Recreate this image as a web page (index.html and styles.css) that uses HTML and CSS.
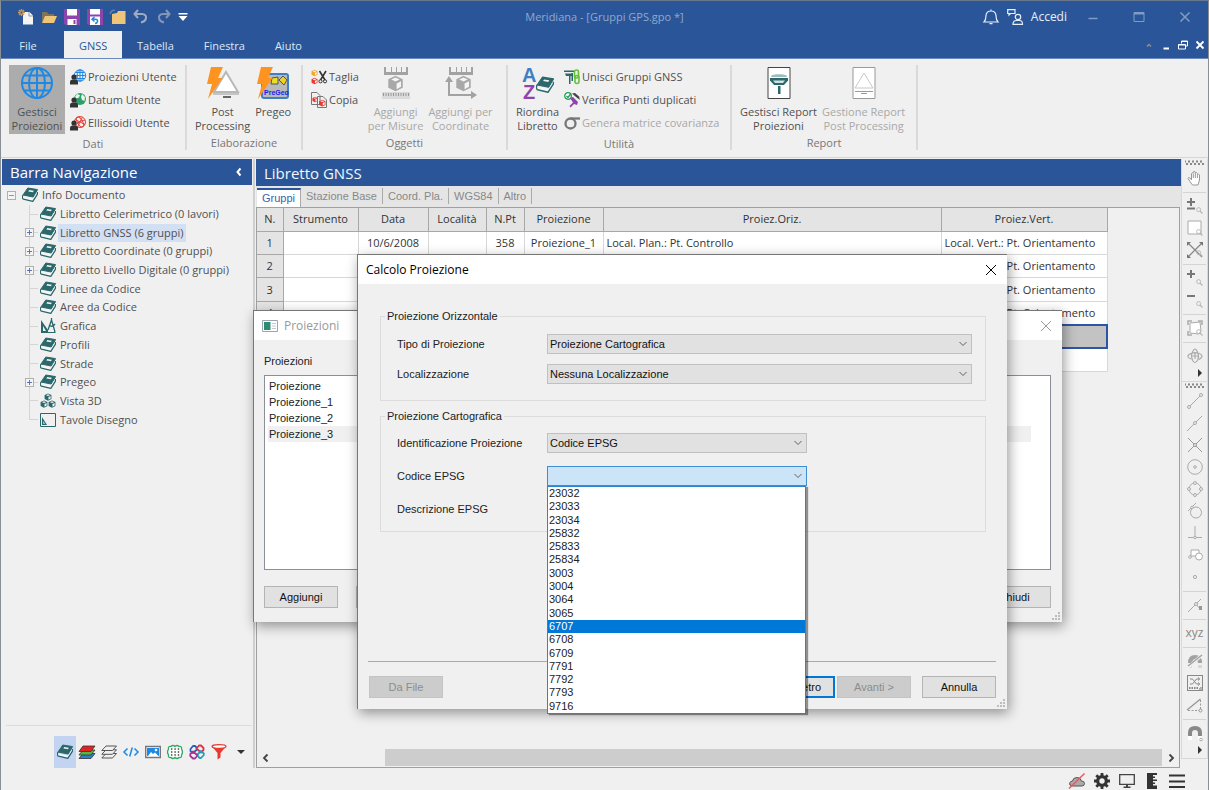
FILE: index.html
```html
<!DOCTYPE html>
<html lang="it">
<head>
<meta charset="utf-8">
<title>Meridiana - [Gruppi GPS.gpo *]</title>
<link rel="stylesheet" href="styles.css">
</head>
<body>
<svg class="defs" aria-hidden="true">
  <symbol id="book" viewBox="0 0 16 16">
    <path d="M5.800 1 15.600 2.600 11.200 10 1 8Z" fill="#2a686c" stroke="#2a686c" stroke-linejoin="round"/>
    <path d="M7.200 3 11.800 3.800 11 5.300 6.300 4.500Z" fill="#f0f0f0"/>
    <path d="M1.300 9.500 11.100 11.600 15.400 4.800 15.200 7.300 10.900 13.600 1.500 11.600Z" fill="#f6f6f6"/>
    <path d="M1 8C0 9.500.2 11.600 1.400 12.200L10.800 14.400 15.500 7V5" fill="none" stroke="#2a686c" stroke-width="1.300" stroke-linejoin="round"/>
  </symbol>
  <symbol id="globe" viewBox="0 0 32 32">
    <g fill="none" stroke="currentColor" stroke-width="2"><circle cx="16" cy="16" r="15"/><ellipse cx="16" cy="16" rx="8" ry="15"/><path d="M16 1V31M1 16H31M3.5 8.5H28.5M3.5 23.5H28.5"/></g>
  </symbol>
  <symbol id="user" viewBox="0 0 16 16">
    <circle cx="4" cy="8" r="2.600" fill="#333"/><path d="M0 15.500V12.600C0 11 1.500 10.400 4 10.400S8 11 8 12.600V15.500Z" fill="#333"/>
  </symbol>
  <symbol id="bolt" viewBox="0 0 16 32"><path d="M4 0H16L11 11H15.500L1 32 5 17H0Z" fill="#ff9320"/></symbol>
  <symbol id="cube" viewBox="0 0 16 16">
    <path d="M8 .8 14.800 4V12L8 15.400 1.200 12V4Z" fill="currentColor"/><path d="M4 4.300 8 2.400 12 4.300 8 6.100ZM9 8 13.200 5.800V11L9 13.300Z" fill="#f4f4f4"/>
  </symbol>
  <symbol id="ruler-top" viewBox="0 0 24 8"><path d="M0 0H24V8H0Z" fill="#a2a2a2"/><path d="M2 0H7V5H2ZM8 0H12V5H8ZM13 0H17V5H13ZM18 0H22V5H18Z" fill="#f0f0f0"/></symbol>
  <symbol id="lens" viewBox="0 0 8 8"><circle cx="3" cy="3" r="2.300" fill="none" stroke="#b4b4b4"/><path d="M4.600 4.600 7.400 7.400" stroke="#b4b4b4" stroke-width="1.300"/></symbol>
  <symbol id="chev" viewBox="0 0 10 6"><path d="M1.500 1 5 4.500 8.500 1" fill="none" stroke="#606060"/></symbol>
  <symbol id="antenna" viewBox="0 0 18 24"><g fill="#2a686c"><path d="M1 5C2 2.500 16 2.500 17 5L16.500 6H1.500Z" opacity=".45"/><path d="M0 7H18V9.500L14 14H4L0 9.500Z"/><path d="M8 15H10.500V23H8Z"/></g><path d="M3 9.500H15L13 12H5Z" fill="#cfe0e0"/></symbol>
  <symbol id="close" viewBox="0 0 12 12"><path d="M1 1 11 11M11 1 1 11" fill="none" stroke="currentColor"/></symbol>
  <symbol id="size-grip" viewBox="0 0 8 8"><path d="M6 0H8V2H6ZM3 3H5V5H3ZM6 3H8V5H6ZM0 6H2V8H0ZM3 6H5V8H3ZM6 6H8V8H6Z" fill="#bdbdbd"/></symbol>
</svg>

<div class="app">
  <header class="titlebar">
    <div class="quick">
      <button aria-label="Nuovo"><svg viewBox="0 0 16 16"><path d="M5 3H11.500L15 6.500V15.500H5Z" fill="#f4f4f4"/><path d="M11 3V7H15" fill="none" stroke="#999"/><path d="M3.500 0V7M0 3.500H7M1 1 6 6M6 1 1 6" stroke="#d49a4a" stroke-width="1.300"/><circle cx="3.500" cy="3.500" r="1" fill="#2a5699"/></svg></button>
      <button aria-label="Apri"><svg viewBox="0 0 16 16"><path d="M1 13V3H6L7.500 5H13V8" fill="#7f7358"/><path d="M1 14 4 7H16L13 14Z" fill="#efc57a"/></svg></button>
      <button aria-label="Salva"><svg viewBox="0 0 16 16"><path d="M0 0H16V16H1.500L0 14.500Z" fill="#8e44ad"/><path d="M3 0H13V6.500H3ZM3.500 10H12.500V16H3.500Z" fill="#fff"/><path d="M9.500 11H11.500V15H9.500Z" fill="#8e44ad"/></svg></button>
      <button aria-label="Salva e ripristina"><svg viewBox="0 0 16 16"><path d="M0 0H16V16H1.500L0 14.500Z" fill="#8e44ad"/><path d="M3 0H13V5.500H3ZM3 7.500H13V16H3Z" fill="#fff"/><path d="M7.500 8 5 10.300 7.500 12.500M5.500 10.300H8.500Q11 10.500 10.500 12.500T8 14.500" fill="none" stroke="#1e88e5" stroke-width="1.500"/></svg></button>
      <button aria-label="Cartella"><svg viewBox="0 0 16 16"><path d="M2 5 7 4 8 2H15.500V15H2Z" fill="#efc57a"/><path d="M0 5C1 2 3 1 5 1.500" fill="none" stroke="#5f7fa8" stroke-width="1.500"/></svg></button>
      <button aria-label="Annulla"><svg viewBox="0 0 16 16"><path d="M5 1 1.500 5 5 9M2 5H9Q13.500 5.500 13 9T8 13.500" fill="none" stroke="#9eabc0" stroke-width="2"/></svg></button>
      <button aria-label="Ripeti"><svg viewBox="0 0 16 16"><path d="M10 1 13.500 5 10 9M13 5H7Q2.500 5.500 3 9T8 13.500" fill="none" stroke="#8496b4" stroke-width="2"/></svg></button>
      <button class="narrow" aria-label="Personalizza"><svg viewBox="0 0 16 16"><path d="M3.500 4H12.500V5.500H3.500ZM3.500 7H12.500L8 12Z" fill="#fff"/></svg></button>
    </div>
    <h1>Meridiana - [Gruppi GPS.gpo *]</h1>
    <div class="account">
      <button aria-label="Notifiche"><svg viewBox="0 0 16 16" fill="none" stroke="#e8eef8" stroke-width="1.200"><path d="M1 13C3 11 3 9.500 3 6.500Q3.500 2 8 2T13 6.500C13 9.500 13 11 15 13ZM8 .5V2M6.500 14.700H9.500"/></svg></button>
      <button class="login"><svg viewBox="0 0 16 16" fill="none" stroke="#e8eef8" stroke-width="1.200"><path d="M.7.700H8V4.500H3.500L2 6V4.500H.7Z"/><circle cx="11" cy="8" r="2.700"/><path d="M6 15.300Q6 11.500 9.500 11.500H12.500Q15.500 11.500 15.500 15.300Z"/></svg>Accedi</button>
      <div class="wincontrols">
        <button aria-label="Riduci"><svg viewBox="0 0 12 12"><path d="M1.500 7.500H10.500" stroke="#7f9bc6" stroke-width="1.500"/></svg></button>
        <button aria-label="Ingrandisci"><svg viewBox="0 0 12 12"><path d="M1 1.500H11V10.500H1Z" fill="none" stroke="#7f9bc6"/><path d="M1 1H11V3.500H1Z" fill="#7f9bc6"/></svg></button>
        <button aria-label="Chiudi"><svg viewBox="0 0 12 12"><path d="M1.500 1.500 10.500 10.500M10.500 1.500 1.500 10.500" stroke="#7f9bc6" stroke-width="1.500"/></svg></button>
      </div>
    </div>
  </header>

  <nav class="menubar">
    <div class="menus">
      <button class="file">File</button>
      <button class="active">GNSS</button>
      <button>Tabella</button>
      <button>Finestra</button>
      <button>Aiuto</button>
    </div>
    <div class="mdi">
      <button aria-label="Comprimi"><svg viewBox="0 0 12 12"><path d="M4 7.500 6 5.500 8 7.500" fill="none" stroke="#8d8d8d" stroke-width="1.500"/></svg></button>
      <button aria-label="Riduci documento"><svg viewBox="0 0 12 12"><path d="M3.500 9.500H9" stroke="#fff" stroke-width="2"/></svg></button>
      <button aria-label="Ripristina documento"><svg viewBox="0 0 12 12" fill="none" stroke="#fff"><path d="M4.500 4.500V2H10.500V7H8.500M4.500 2.500H10.500M1.500 5.500H8.500V10H1.500ZM1.500 6H8.500"/></svg></button>
      <button aria-label="Chiudi documento"><svg viewBox="0 0 12 12"><path d="M2.500 2.500 9.500 9.500M9.500 2.500 2.500 9.500" stroke="#fff" stroke-width="1.800"/></svg></button>
    </div>
  </nav>

  <section class="ribbon">
    <div class="group dati">
      <div class="tools">
        <button class="big pressed"><svg class="blue" viewBox="0 0 32 32"><use href="#globe"/></svg>Gestisci<br>Proiezioni</button>
        <div class="stack">
          <button><svg viewBox="0 0 16 16"><g fill="none" stroke="#1e88e5"><circle cx="10" cy="6.500" r="5.700"/><ellipse cx="10" cy="6.500" rx="2.800" ry="5.700"/><path d="M10 1V12M4.500 6.500H15.500M5.500 3.500H14.500M5.500 9.500H14.500"/></g><use href="#user"/></svg>Proiezioni Utente</button>
          <button><svg viewBox="0 0 16 16"><circle cx="10" cy="7" r="6" fill="#2e9e6b"/><path d="M7 2 10 3 9 5.500 6.500 6.500 5 5ZM12 2 15 5 14.500 9 12 8 11 5Z" fill="#e8f4ee"/><use href="#user"/></svg>Datum Utente</button>
          <button><svg viewBox="0 0 16 16"><g fill="none" stroke="#e0443a"><circle cx="10" cy="7" r="5.500"/><ellipse cx="10" cy="7" rx="2.500" ry="5.500" transform="rotate(-30 10 7)"/><path d="M5 4.500 15 9.500M7.500 12 12.500 2M6 9.500Q10 5 15 5"/></g><use href="#user"/></svg>Ellissoidi Utente</button>
        </div>
      </div>
      <h2>Dati</h2>
    </div>
    <div class="group elaborazione">
      <div class="tools">
        <button class="big"><svg viewBox="0 0 32 32"><path d="M19 5 31 25H7Z" fill="#fff" stroke="#b8b8b8" stroke-width="2"/><path d="M6 26H32V28H6Z" fill="#c4c4c4"/><path d="M16 29H24V31H16Z" fill="#666"/><use href="#bolt" x="0" y="0" width="16" height="32"/></svg>Post<br>Processing</button>
        <button class="big"><svg viewBox="0 0 32 32"><rect x="5" y="7" width="26" height="24" rx="2" fill="#b9b9b9" stroke="#3f7fc4" stroke-width="2"/><path d="M15 11 21 10V17H14Z" fill="#e8e020" stroke="#555"/><path d="M22 13 26 9 30 13 27 18Z" fill="#f2d020" stroke="#555"/><use href="#bolt" x="0" y="0" width="16" height="32"/><text x="7" y="28" class="pregeo">PreGeo</text></svg>Pregeo</button>
      </div>
      <h2>Elaborazione</h2>
    </div>
    <div class="group oggetti">
      <div class="tools">
        <div class="stack">
          <button><svg viewBox="0 0 16 16"><use href="#cube" class="orange" width="7" height="8"/><use href="#cube" class="red" y="8" width="7" height="8"/><path d="M8.500 2 14 11M15 2 9.500 11" stroke="#333" stroke-width="1.600"/><circle cx="9.500" cy="12.300" r="1.600" fill="none" stroke="#333"/><circle cx="14" cy="12.300" r="1.600" fill="none" stroke="#333"/></svg>Taglia</button>
          <button><svg viewBox="0 0 16 16"><path d="M.5.500H6L9 3.500V12.500H.5ZM6.500 4.500H12L15.500 8V15.500H6.500Z" fill="#f0f0f0" stroke="#777"/><use href="#cube" class="red" x="1" y="4" width="6" height="7"/><use href="#cube" class="red" x="7.500" y="7" width="7.500" height="8"/></svg>Copia</button>
        </div>
        <button class="big" disabled><svg viewBox="0 0 32 32"><use href="#ruler-top" x="4" width="24" height="8"/><use href="#cube" x="7" y="8" width="17" height="17"/><path d="M2 25H30V32H2Z" fill="#dadada"/><path d="M3 27.500H29" stroke="#999" stroke-width="3" stroke-dasharray="1 1.500"/></svg>Aggiungi<br>per Misure</button>
        <button class="big" disabled><svg viewBox="0 0 32 32"><use href="#ruler-top" x="4" width="24" height="8"/><use href="#cube" x="10" y="8" width="17" height="17"/><path d="M4 12V28H28" fill="none" stroke="#a2a2a2" stroke-width="2"/><path d="M0 15 4 9 8 15ZM26 24 32 28 26 32Z" fill="#a2a2a2"/></svg>Aggiungi per<br>Coordinate</button>
      </div>
      <h2>Oggetti</h2>
    </div>
    <div class="group utilita">
      <div class="tools">
        <button class="big"><svg viewBox="0 0 32 32"><text x="0" y="15" class="az a">A</text><text x="1" y="32" class="az z">Z</text><use href="#book" x="14" y="9" width="18" height="18"/></svg>Riordina<br>Libretto</button>
        <div class="stack">
          <button><svg viewBox="0 0 16 16"><path d="M0 1.500H10V3H0ZM1 4.500H9L7.500 7H2ZM5 7H6.500V15H5ZM7.500 4H9V12H7.500Z" fill="#2a686c"/><rect x="10.500" y="1" width="4" height="8" rx="2" fill="none" stroke="#63c132" stroke-width="1.600"/><rect x="11" y="6.500" width="4" height="8" rx="2" fill="none" stroke="#63c132" stroke-width="1.600"/></svg>Unisci Gruppi GNSS</button>
          <button><svg viewBox="0 0 16 16"><circle cx="4" cy="4" r="3.300" fill="#fff" stroke="#1f9d57" stroke-width="1.300"/><path d="M2.500 4 4 5.500 7 1.500" fill="none" stroke="#1f9d57" stroke-width="1.300"/><path d="M8 1.500 11 1 15 4.500 16 8 12 5Z" fill="#444"/><path d="M6 6 9 5 14 10 13 13 10 12 6.500 15.500 5.500 14 9 10.500Z" fill="#8e44ad"/></svg>Verifica Punti duplicati</button>
          <button disabled><svg viewBox="0 0 16 16"><circle cx="6.500" cy="8.500" r="5" fill="none" stroke="#777" stroke-width="2.300"/><path d="M6.500 3.500H16" stroke="#777" stroke-width="2.300"/></svg>Genera matrice covarianza</button>
        </div>
      </div>
      <h2>Utilità</h2>
    </div>
    <div class="group report">
      <div class="tools">
        <button class="big"><svg viewBox="0 0 32 32"><path d="M5 .5H27V31.500H5Z" fill="#fff" stroke="#444"/><use href="#antenna" x="7" y="4" width="18" height="24"/></svg>Gestisci Report<br>Proiezioni</button>
        <button class="big" disabled><svg viewBox="0 0 32 32"><path d="M5 .5H27V31.500H5Z" fill="#fff" stroke="#999"/><path d="M16 6 25 21H7Z" fill="none" stroke="#c8c8c8"/><path d="M7 24.500H25M13 26.500H19" stroke="#999"/></svg>Gestione Report<br>Post Processing</button>
      </div>
      <h2>Report</h2>
    </div>
  </section>

  <div class="work">
    <aside class="nav">
      <div class="navhead"><h2>Barra Navigazione</h2><button aria-label="Comprimi barra"><svg viewBox="0 0 12 12"><path d="M7.500 2.500 4.500 6 7.500 9.500" fill="none" stroke="#fff" stroke-width="2"/></svg></button></div>
      <ul class="tree">
        <li class="root"><span class="branch"><button class="toggle minus" aria-label="Comprimi"></button></span><svg><use href="#book"/></svg><span class="label">Info Documento</span></li>
        <li><span class="branch"></span><svg><use href="#book"/></svg><span class="label">Libretto Celerimetrico (0 lavori)</span></li>
        <li><span class="branch"><button class="toggle" aria-label="Espandi"></button></span><svg><use href="#book"/></svg><span class="label selected">Libretto GNSS (6 gruppi)</span></li>
        <li><span class="branch"><button class="toggle" aria-label="Espandi"></button></span><svg><use href="#book"/></svg><span class="label">Libretto Coordinate (0 gruppi)</span></li>
        <li><span class="branch"><button class="toggle" aria-label="Espandi"></button></span><svg><use href="#book"/></svg><span class="label">Libretto Livello Digitale (0 gruppi)</span></li>
        <li><span class="branch"></span><svg><use href="#book"/></svg><span class="label">Linee da Codice</span></li>
        <li><span class="branch"></span><svg><use href="#book"/></svg><span class="label">Aree da Codice</span></li>
        <li><span class="branch"></span><svg viewBox="0 0 16 16"><path d="M1 2 8 12V15H1ZM3 8V13H6Z" fill="#2a686c" fill-rule="evenodd"/><path d="M8 12 11.500 2 15 14M9 7Q12 10 15 6M11.500 0V2" fill="none" stroke="#2a686c" stroke-width="1.300"/><path d="M8 14.500H15.500" stroke="#2a686c"/></svg><span class="label">Grafica</span></li>
        <li><span class="branch"></span><svg><use href="#book"/></svg><span class="label">Profili</span></li>
        <li><span class="branch"></span><svg><use href="#book"/></svg><span class="label">Strade</span></li>
        <li><span class="branch"><button class="toggle" aria-label="Espandi"></button></span><svg><use href="#book"/></svg><span class="label">Pregeo</span></li>
        <li><span class="branch"></span><svg class="teal" viewBox="0 0 16 16"><use href="#cube" x="4" y="0" width="8" height="8"/><use href="#cube" x="0" y="7" width="8" height="8"/><use href="#cube" x="8" y="7" width="8" height="8"/></svg><span class="label">Vista 3D</span></li>
        <li class="last"><span class="branch"></span><svg viewBox="0 0 16 16"><path d="M.5 1.500H15.500V14.500H.5Z" fill="none" stroke="#2a686c"/><path d="M2 5 7 13H2ZM3.300 9V11.700H5Z" fill="#2a686c" fill-rule="evenodd"/></svg><span class="label">Tavole Disegno</span></li>
      </ul>
      <div class="navfoot">
        <button class="on" aria-label="Libretti"><svg><use href="#book"/></svg></button>
        <button aria-label="Livelli colore"><svg viewBox="0 0 16 16" stroke="#333" stroke-width=".8"><path d="M4 9.500H16L12 14.500H0Z" fill="#2a7fd0"/><path d="M4 6H16L12 11H0Z" fill="#55b545"/><path d="M4 2H16L12 7.500H0Z" fill="#e02424"/></svg></button>
        <button aria-label="Livelli"><svg viewBox="0 0 16 16" fill="#f0f0f0" stroke="#555"><path d="M5 9.500H15.500L11.500 14H.8Z"/><path d="M5 5.800H15.500L11.500 10.300H.8Z"/><path d="M5 2H15.500L11.500 6.500H.8Z"/></svg></button>
        <button aria-label="Codice"><svg viewBox="0 0 16 16" fill="none" stroke="#1e88e5" stroke-width="1.500"><path d="M4.500 4.500 1 8 4.500 11.500M11.500 4.500 15 8 11.500 11.500M9.300 3.500 6.700 12.500"/></svg></button>
        <button aria-label="Immagini"><svg viewBox="0 0 16 16"><path d="M.7 2.500H15.300V13.500H.7Z" fill="#fff" stroke="#777" stroke-width="1.400"/><path d="M2 4H14V12H2Z" fill="#1e88e5"/><path d="M3 12 6 8 8 10 10 8.500 13.500 12Z" fill="#fff"/><circle cx="11" cy="6" r="1.300" fill="#fff"/></svg></button>
        <button aria-label="Nuvola di punti"><svg viewBox="0 0 16 16"><path d="M4 2.500Q6 .5 8 2.500Q10 .5 12 2.500Q15 2 14.500 5Q16.500 8 14.500 11Q15 14 12 13.500Q10 15.500 8 13.500Q6 15.500 4 13.500Q1 14 1.500 11Q-.5 8 1.500 5Q1 2 4 2.500Z" fill="#fff" stroke="#2eaa60" stroke-width="1.300"/><path d="M4 5H13M4 8H13M4 11H13" stroke="#444" stroke-width="1.400" stroke-dasharray="1.400 2"/></svg></button>
        <button aria-label="Blocchi"><svg viewBox="0 0 16 16" fill="none" stroke-width="1.800" stroke-linejoin="round"><path d="M8 4 6 2H4L1.500 5V7L4 9 8.500 5" stroke="#2464b4"/><path d="M7 5 10 1.500H12L14.500 4V6L12 8.500 8 5" stroke="#e0304c"/><path d="M9 12 10.500 14H12L14.800 11V9.500L12 7 8 11" stroke="#20a0b4"/><path d="M9 11 6 14.500H4L1.300 12V10L4 7.500 8 11" stroke="#a83298"/></svg></button>
        <button aria-label="Filtro"><svg viewBox="0 0 16 16"><path d="M1 2.500 6.500 9V15.500L9.500 13.500V9L15 2.500Z" fill="#e8392e"/><ellipse cx="8" cy="2.500" rx="7" ry="1.800" fill="#fff" stroke="#e8392e" stroke-width="1.200"/></svg></button>
        <button aria-label="Altro"><svg viewBox="0 0 16 16"><path d="M4 6H12L8 10Z" fill="#333"/></svg></button>
      </div>
    </aside>

    <main class="doc">
      <h2 class="dochead">Libretto GNSS</h2>
      <div class="tabs">
        <button class="active">Gruppi</button><button>Stazione Base</button><button>Coord. Pla.</button><button>WGS84</button><button>Altro</button>
      </div>
      <div class="pane">
        <div class="gridarea">
          <table>
            <colgroup><col class="c26"><col class="c75"><col class="c70"><col class="c58"><col class="c38"><col class="c79"><col class="c338"><col class="c166"></colgroup>
            <thead><tr><th>N.</th><th>Strumento</th><th>Data</th><th>Località</th><th>N.Pt</th><th>Proiezione</th><th>Proiez.Oriz.</th><th>Proiez.Vert.</th></tr></thead>
            <tbody>
              <tr><th>1</th><td></td><td class="center">10/6/2008</td><td></td><td class="center">358</td><td class="center">Proiezione_1</td><td>Local. Plan.: Pt. Controllo</td><td>Local. Vert.: Pt. Orientamento</td></tr>
              <tr><th>2</th><td></td><td></td><td></td><td></td><td></td><td></td><td>Local. Vert.: Pt. Orientamento</td></tr>
              <tr><th>3</th><td></td><td></td><td></td><td></td><td></td><td></td><td>Local. Vert.: Pt. Orientamento</td></tr>
              <tr><th>4</th><td></td><td></td><td></td><td></td><td></td><td></td><td>Local. Vert.: Pt. Orientamento</td></tr>
              <tr><th></th><td></td><td></td><td></td><td></td><td></td><td></td><td class="current"></td></tr>
              <tr><th></th><td></td><td></td><td></td><td></td><td></td><td></td><td></td></tr>
            </tbody>
          </table>
        </div>
        <div class="scroll">
          <button aria-label="Scorri a sinistra"><svg viewBox="0 0 12 12"><path d="M7.500 2.500 4 6 7.500 9.500" fill="none" stroke="#444" stroke-width="1.800"/></svg></button>
          <div class="track"><div class="thumb"></div></div>
          <button aria-label="Scorri a destra"><svg viewBox="0 0 12 12"><path d="M4.500 2.500 8 6 4.500 9.500" fill="none" stroke="#444" stroke-width="1.800"/></svg></button>
        </div>
      </div>
    </main>

    <div class="toolbar">
      <div class="bar">
        <div class="grip"></div>
        <button aria-label="Sposta"><svg viewBox="0 0 16 16"><path d="M4 13 1 8.500Q1 7 3 8L4.500 10V3.500Q5.200 2 6.200 3.500V2Q7 .5 8.200 2V3Q9.500 1.500 10.300 3.500V4.500Q12 3.500 12.500 5V10L11 15H5.500ZM6.300 4V8M8.300 3V8M10.400 5V8" fill="#fff" stroke="#999"/></svg></button>
        <hr>
        <button aria-label="Zoom dinamico"><svg viewBox="0 0 16 16"><path d="M4 0V8M0 4H8M0 10.500H8" stroke="#777" stroke-width="2"/><use href="#lens" x="9" y="9" width="7" height="7"/></svg></button>
        <button aria-label="Zoom finestra"><svg viewBox="0 0 16 16"><path d="M1 1H14V14H1Z" fill="#fff" stroke="#aaa"/><use href="#lens" x="9" y="9" width="7" height="7"/></svg></button>
        <button aria-label="Zoom estensione"><svg viewBox="0 0 16 16"><path d="M1 1 15 15M15 1 1 15" stroke="#888" stroke-width="1.300"/><path d="M0 0H4L0 4ZM16 0V4L12 0ZM0 16V12L4 16Z" fill="#777"/><use href="#lens" x="9" y="8" width="7" height="7"/></svg></button>
        <hr>
        <button aria-label="Zoom avanti"><svg viewBox="0 0 16 16"><path d="M4 0V8M0 4H8" stroke="#777" stroke-width="2"/><use href="#lens" x="9" y="9" width="7" height="7"/></svg></button>
        <button aria-label="Zoom indietro"><svg viewBox="0 0 16 16"><path d="M0 4H8" stroke="#777" stroke-width="2"/><use href="#lens" x="9" y="9" width="7" height="7"/></svg></button>
        <hr>
        <button aria-label="Zoom selezione"><svg viewBox="0 0 16 16"><path d="M3 3 13 2 14 11 12 14 3 13Z" fill="#fff" stroke="#aaa"/><path d="M1 5V1H5M11 1H15V5M1 11V15H5" fill="none" stroke="#aaa" stroke-width="1.500"/><use href="#lens" x="9" y="9" width="7" height="7"/></svg></button>
        <hr>
        <button aria-label="Orbita"><svg viewBox="0 0 16 16" fill="none" stroke="#aaa" stroke-width="1.200"><path d="M4 11Q-1 9 2 6.500Q6 4 11 5Q17 7 14 10L12 11.500M6 13Q3 8 6 3Q8-1 10 3Q13 9 10 13Q8 16 6 13M8 5V11M5 8H11"/></svg></button>
        <button class="more" aria-label="Altri strumenti"><svg viewBox="0 0 8 8"><path d="M2 0 6 4 2 8Z" fill="#333"/></svg></button>
      </div>
      <div class="bar">
        <div class="grip"></div>
        <button aria-label="Estremi"><svg viewBox="0 0 16 16" fill="#f0f0f0" stroke="#aaa"><path d="M2 14 14 2"/><circle cx="2" cy="14" r="1.500"/><circle cx="14" cy="2" r="1.500"/></svg></button>
        <button aria-label="Punto medio"><svg viewBox="0 0 16 16" fill="#f0f0f0" stroke="#aaa"><path d="M0 16 15 1"/><circle cx="8" cy="8" r="1.500"/></svg></button>
        <button aria-label="Intersezione"><svg viewBox="0 0 16 16" fill="#f0f0f0" stroke="#999"><path d="M1 1 15 15M15 1 1 15"/><circle cx="8" cy="8" r="1.500"/></svg></button>
        <button aria-label="Centro"><svg viewBox="0 0 16 16" fill="none" stroke="#aaa"><circle cx="8" cy="8" r="7.300"/><circle cx="8" cy="8" r="1.300"/></svg></button>
        <button aria-label="Quadrante"><svg viewBox="0 0 16 16" fill="#f0f0f0" stroke="#aaa"><circle cx="8" cy="8" r="6"/><circle cx="8" cy="2" r="1.500"/><circle cx="8" cy="14" r="1.500"/><circle cx="2" cy="8" r="1.500"/><circle cx="14" cy="8" r="1.500"/></svg></button>
        <button aria-label="Tangente"><svg viewBox="0 0 16 16" fill="none" stroke="#aaa"><circle cx="9" cy="9.500" r="5.500"/><path d="M1 8 9 0"/><circle cx="5" cy="4.500" r="1.300" fill="#f0f0f0"/></svg></button>
        <button aria-label="Perpendicolare"><svg viewBox="0 0 16 16" fill="#f0f0f0" stroke="#aaa"><path d="M8 1V13M1 12.500H15"/><circle cx="8" cy="12.500" r="1.300"/></svg></button>
        <button aria-label="Inserimento"><svg viewBox="0 0 16 16" fill="#fff" stroke="#aaa"><path d="M4 9V3H12V9Z"/><circle cx="12" cy="9.500" r="3.500"/><circle cx="3" cy="10" r="1.300"/></svg></button>
        <button aria-label="Nodo"><svg viewBox="0 0 16 16" fill="none" stroke="#aaa"><circle cx="8" cy="8" r="1.600"/></svg></button>
        <hr>
        <button aria-label="Vicino"><svg viewBox="0 0 16 16"><path d="M1 15 14 2M9 7 13 12" fill="none" stroke="#aaa"/><circle cx="9" cy="7" r="1.500" fill="#f0f0f0" stroke="#aaa"/><path d="M12 9H15V13H12Z" fill="#999"/></svg></button>
        <hr>
        <button class="xyz" aria-label="Coordinate xyz">xyz</button>
        <hr>
        <button aria-label="Disattiva snap"><svg viewBox="0 0 16 16"><path d="M1 10Q1 2 8 2T15 10H11Q10 6 8 6T5 10Z" fill="#a2a2a2"/><path d="M1 12H5V15H1ZM11 12H15V15H11Z" fill="#d8d8d8"/><path d="M0 15 15 2" stroke="#f0f0f0" stroke-width="3"/><path d="M1 13 15 2" stroke="#a2a2a2" stroke-width="1.500"/></svg></button>
        <button aria-label="Scambia"><svg viewBox="0 0 16 16" fill="none" stroke="#888"><rect x=".5" y=".5" width="15" height="15"/><path d="M3 4H5.500L9.500 9H12M3 9H5.500L9.500 4H12M11 2.500 12.800 4 11 5.500M11 7.500 12.800 9 11 10.500"/><path d="M2 13H12" stroke-width="2" stroke-dasharray="1.500 1"/><circle cx="14" cy="14" r="1.300" fill="#f0f0f0"/></svg></button>
        <button aria-label="Angolo"><svg viewBox="0 0 16 16" fill="none" stroke="#999"><path d="M0 13 13.500 2" stroke-width="1.400"/><path d="M13.500 3V12M1 13.500H12" stroke-dasharray="2 1.500"/><circle cx="13.500" cy="13.500" r="1.500"/></svg></button>
        <hr>
        <button aria-label="Snap"><svg viewBox="0 0 16 16"><path d="M3 11V8Q3 3 8 3T13 8V11" fill="none" stroke="#888" stroke-width="4"/><path d="M1 11H5V15H1ZM11 11H15V15H11Z" fill="#fff"/><circle cx="14" cy="14.500" r="1.300" fill="none" stroke="#aaa"/></svg></button>
        <button class="more" aria-label="Altri snap"><svg viewBox="0 0 8 8"><path d="M2 0 6 4 2 8Z" fill="#333"/></svg></button>
      </div>
    </div>
  </div>

  <footer class="status">
    <button aria-label="Cloud non connesso"><svg viewBox="0 0 16 16"><path d="M3 13Q0 12.500.7 10Q1.500 8 3.500 8Q4 4.500 8 4.500Q12 4.500 12.300 8Q15.500 8 15.500 10.500Q15.300 13 13 13Z" fill="#aaa" stroke="#555"/><path d="M0 15.500 15.500.5" stroke="#f0565a" stroke-width="1.500"/></svg></button>
    <button aria-label="Impostazioni"><svg viewBox="0 0 16 16"><circle cx="8" cy="8" r="4.200" fill="none" stroke="#333" stroke-width="3.500"/><path d="M8 0V16M0 8H16M2.300 2.300 13.700 13.700M13.700 2.300 2.300 13.700" stroke="#333" stroke-width="2.800"/><circle cx="8" cy="8" r="2.700" fill="#f0f0f0"/></svg></button>
    <button aria-label="Schermo"><svg viewBox="0 0 16 16"><path d="M.7 1.700H15.300V11.300H.7Z" fill="none" stroke="#444" stroke-width="1.300"/><path d="M7 11.500H9V13.500H11.500V15H4.500V13.500H7Z" fill="#444"/></svg></button>
    <button aria-label="Righello"><svg viewBox="0 0 16 16"><path d="M3 0H13V2H9V3.500H11V5H9V6.500H13V8H9V9.500H11V11H9V12.500H13V16H3Z" fill="#333"/></svg></button>
    <button aria-label="Menu"><svg viewBox="0 0 16 16"><path d="M0 2.500H16M0 8.500H16M0 14H16" stroke="#333" stroke-width="1.800"/></svg></button>
  </footer>

  <section class="window projections" role="dialog" aria-labelledby="w1">
    <header><svg class="winicon" viewBox="0 0 16 12"><path d="M.5.500H15.500V11.500H.5Z" fill="#fff" stroke="#9aa5b1"/><path d="M2 2H8.500V10H2Z" fill="#2f8a72"/><path d="M10 3.500H14M10 6H14M10 8.500H14" stroke="#c0c8d0"/></svg><h2 id="w1">Proiezioni</h2><button class="x" aria-label="Chiudi"><svg><use href="#close"/></svg></button></header>
    <div class="winbody">
      <h3 id="plist">Proiezioni</h3>
      <ul class="listbox" role="listbox" aria-labelledby="plist">
        <li role="option">Proiezione</li><li role="option">Proiezione_1</li><li role="option">Proiezione_2</li><li role="option" aria-selected="true" class="sel">Proiezione_3</li>
      </ul>
      <div class="buttons"><button class="btn">Aggiungi</button><button class="btn"></button><button class="btn end">Chiudi</button></div>
    </div>
    <svg class="sizegrip"><use href="#size-grip"/></svg>
  </section>

  <section class="window calc" role="dialog" aria-labelledby="w2">
    <header><h2 id="w2">Calcolo Proiezione</h2><button class="x" aria-label="Chiudi"><svg><use href="#close"/></svg></button></header>
    <form class="form">
      <fieldset class="horizontal">
        <legend>Proiezione Orizzontale</legend>
        <div class="field"><label for="tipo">Tipo di Proiezione</label><div class="pick"><select id="tipo"><option>Proiezione Cartografica</option></select><svg><use href="#chev"/></svg></div></div>
        <div class="field"><label for="loc">Localizzazione</label><div class="pick"><select id="loc"><option>Nessuna Localizzazione</option></select><svg><use href="#chev"/></svg></div></div>
      </fieldset>
      <fieldset class="carto">
        <legend>Proiezione Cartografica</legend>
        <div class="field"><label for="ident">Identificazione Proiezione</label><div class="pick short"><select id="ident"><option>Codice EPSG</option></select><svg><use href="#chev"/></svg></div></div>
        <div class="field"><label for="epsg">Codice EPSG</label><div class="pick short open"><select id="epsg"><option></option></select><svg><use href="#chev"/></svg>
          <ul class="droplist" role="listbox"><li>23032</li><li>23033</li><li>23034</li><li>25832</li><li>25833</li><li>25834</li><li>3003</li><li>3004</li><li>3064</li><li>3065</li><li class="hot">6707</li><li>6708</li><li>6709</li><li>7791</li><li>7792</li><li>7793</li><li>9716</li></ul></div></div>
        <div class="field"><span>Descrizione EPSG</span></div>
      </fieldset>
      <div class="actions">
        <button type="button" class="btn" disabled>Da File</button>
        <button type="button" class="btn default">&lt; Indietro</button>
        <button type="button" class="btn" disabled>Avanti &gt;</button>
        <button type="button" class="btn cancel">Annulla</button>
      </div>
    </form>
    <svg class="sizegrip"><use href="#size-grip"/></svg>
  </section>
</div>
</body>
</html>
```
FILE: styles.css
```css
* { box-sizing: border-box; margin: 0; padding: 0; }
:root {
  --blue: #2a5699;
  --ui: "Open Sans", "Noto Sans", sans-serif;
  --dlg: "Liberation Sans", Arial, sans-serif;
}
body { font: 11px/16px var(--ui); color: #505050; background: #f0f0f0; }
button { font: inherit; color: inherit; background: none; border: 0; }
svg { display: block; width: 16px; height: 16px; flex: none; overflow: visible; }
ul { list-style: none; }
h1, h2, h3 { font-weight: 400; font-size: inherit; }
.defs { position: absolute; width: 0; height: 0; }
.blue { color: #1e88e5; }
.orange { color: #f5a623; }
.red { color: #e8392e; }
.teal { color: #2a686c; }

.app { position: relative; display: flex; flex-direction: column; height: 100vh; border: 1px solid #8a8f96; border-top-color: #67788d; border-bottom: 0; overflow: hidden; }

.titlebar { display: grid; grid-template-columns: 1fr auto 1fr; align-items: center; height: 31px; background: var(--blue); }
.titlebar h1 { color: #8fa9d0; }
.quick { display: flex; gap: 7px; padding-left: 17px; }
.quick .narrow { margin-left: -4px; }
.account { display: flex; justify-content: flex-end; align-items: center; color: #e8eef8; font-size: 12px; }
.login { display: flex; align-items: center; gap: 8px; margin-left: 8px; }
.wincontrols { display: flex; gap: 34px; padding: 0 17px 0 20px; }
.wincontrols svg, .mdi svg { width: 12px; height: 12px; }

.menubar { display: flex; justify-content: space-between; align-items: flex-end; height: 27px; background: var(--blue); color: #dfe7f3; border-bottom: 1px solid #6a8abd; }
.menus { display: flex; height: 27px; }
.menus button { padding: 3px 15px 0; }
.menus .file { width: 54px; margin-right: 9px; }
.menus .active { width: 58px; background: #f0f0f0; color: var(--blue); }
.mdi { display: flex; gap: 5px; padding: 0 2px 7px 0; }

.ribbon { display: flex; height: 99px; padding: 6px 0 7px; border-bottom: 1px solid #d6d6d6; }
.group { display: flex; flex-direction: column; padding: 0 8px; border-right: 2px solid #dadada; }
.group h2 { text-align: center; line-height: 20px; color: #777; }
.tools { display: flex; gap: 5px; height: 70px; }
.big { display: flex; flex-direction: column; align-items: center; padding-top: 2px; line-height: 14px; white-space: nowrap; flex: none; }
.big svg { width: 32px; height: 32px; margin-bottom: 6px; }
.big.pressed { background: #acacac; width: 56px; }
.ribbon button:disabled { color: #a8a8a8; }
.stack { display: flex; flex-direction: column; }
.stack button { display: flex; align-items: center; gap: 2px; height: 23px; white-space: nowrap; }
.dati { width: 186px; }
.elaborazione { width: 116px; }
.oggetti { width: 205px; }
.oggetti .stack { margin-right: 4px; }
.utilita { width: 224px; }
.report { width: 186px; }
.pregeo { font: bold 7px var(--dlg); fill: #2020f0; }
.az { font: bold 20px var(--dlg); }
.a { fill: #3f7fc4; }
.z { fill: #8e44ad; }

.work { flex: 1; display: flex; min-height: 0; padding-top: 1px; }
.nav { display: flex; flex-direction: column; width: 251px; flex: none; padding-left: 1px; }
.navhead { display: flex; justify-content: space-between; align-items: center; height: 26px; padding: 0 7px 0 8px; background: var(--blue); color: #fff; }
.navhead h2, .dochead { font-size: 15px; line-height: 26px; }
.navhead svg { width: 12px; height: 12px; }
.tree { display: grid; grid-auto-rows: 1fr; height: 243px; margin-top: 1px; padding-left: 22px; }
.tree li { display: flex; align-items: center; }
.tree li.root { margin-left: -18px; }
.branch { display: flex; align-items: center; width: 16px; height: 100%; background: linear-gradient(#d4d4d4, #d4d4d4) 5px 0 / 1px 100% no-repeat, linear-gradient(#d4d4d4, #d4d4d4) 5px 50% / 9px 1px no-repeat; }
.root .branch { background: none; }
.last .branch { background-size: 1px 50%, 9px 1px; }
.toggle { width: 9px; height: 9px; margin-left: 1px; border: 1px solid #b0b0b0; background: linear-gradient(#5a78b4, #5a78b4) center / 5px 1px no-repeat, linear-gradient(#5a78b4, #5a78b4) center / 1px 5px no-repeat, #f4f4f4; }
.toggle.minus { background: linear-gradient(#7f97c4, #7f97c4) center / 5px 1px no-repeat, #f4f4f4; }
.label { margin-left: 2px; padding: 0 2px; line-height: 18px; white-space: nowrap; }
.selected { background: #d3dff3; }
.navfoot { display: flex; align-items: center; margin: auto 0 0 4px; padding: 10px 0 0 48px; border-top: 1px solid #dcdcdc; }
.navfoot button { display: grid; place-items: center; flex: none; width: 22px; height: 32px; }
.navfoot .on { background: #c3d4f2; }

.doc { flex: 1; display: flex; flex-direction: column; min-width: 0; border-left: 2px solid #d0d0d0; margin-left: 1px; padding-left: 1px; }
.dochead { height: 27px; line-height: 28px; padding-left: 8px; background: var(--blue); color: #f4f6fa; }
.tabs { display: flex; height: 21px; padding: 2px 0 0 1px; background: #e5e5e5; font: 11px/16px var(--dlg); color: #888; }
.tabs button { padding: 0 5px; height: 16px; border-right: 1px solid #aaa; }
.tabs .active { height: 19px; padding-bottom: 3px; border-top: 2px solid var(--blue); background: #fff; color: #3465b0; }
.pane { flex: 1; display: flex; flex-direction: column; min-height: 0; border: 1px solid #a0a0a0; margin-right: 1px; }
.gridarea { flex: 1; min-height: 0; overflow: hidden; }
table { border-collapse: collapse; table-layout: fixed; width: 850px; height: 164px; color: #333; background: #fff; }
tr { height: 23px; }
th { font-weight: 400; background: #e4e4e4; border: 1px solid #a8a8a8; border-width: 0 1px 1px 0; text-align: center; }
td { border: 1px solid #d8d8d8; border-width: 0 1px 1px 0; padding: 0 3px; white-space: nowrap; overflow: hidden; }
.center { text-align: center; }
td.current { background: #c3c3c3; border: 2px solid #2c56a4; }
.c26 { width: 26px; } .c75 { width: 75px; } .c70 { width: 70px; } .c58 { width: 58px; } .c38 { width: 38px; } .c79 { width: 79px; } .c338 { width: 338px; } .c166 { width: 166px; }
.scroll { display: flex; height: 18px; padding-bottom: 1px; background: #f0f0f0; }
.scroll button { display: grid; place-items: center; width: 17px; }
.scroll svg { width: 12px; height: 12px; }
.track { flex: 1; display: flex; padding-left: 111px; }
.thumb { flex: 1; background: #cdcdcd; }

.toolbar { width: 27px; flex: none; }
.bar { padding: 0 1px 2px; border: 1px solid #d8d8d8; border-width: 0 1px 1px; }
.grip { height: 8px; margin: 0 2px; background: radial-gradient(circle, #888 40%, transparent 50%) 0 3px / 4px 4px repeat-x, radial-gradient(circle, #888 40%, transparent 50%) 2px 1px / 4px 3px repeat-x; }
.bar button { display: grid; place-items: center; width: 100%; height: 22px; }
.bar hr { height: 6px; border: 0; background: linear-gradient(#d4d4d4, #d4d4d4) 0 3px / 100% 1px no-repeat; }
.bar .more { height: 12px; justify-items: end; padding-right: 2px; }
.bar .more svg { width: 8px; height: 8px; }
.xyz { color: #888; font-size: 12px; }

.status { display: flex; justify-content: flex-end; align-items: center; gap: 9px; height: 22px; padding: 4px 23px 0 0; }

.window { position: absolute; background: #f0f0f0; color: #222; font: 11px/14px var(--dlg); border: 1px solid #777; border-width: 1px 0 0 1px; box-shadow: 2px 4px 12px rgba(0, 0, 0, .4); }
.window header { display: flex; align-items: center; height: 29px; background: #fff; color: #000; font: 12px/16px var(--ui); padding: 0 10px 0 8px; }
.window .x { margin-left: auto; }
.x svg { width: 12px; height: 12px; }
.btn { width: 74px; height: 22px; background: #e1e1e1; border: 1px solid #b4b4b4; color: #111; }
.btn:disabled { background: #ccc; border-color: #c4c4c4; color: #8c8c8c; }
.btn.default { border: 2px solid #0078d7; }
.sizegrip { position: absolute; right: 2px; bottom: 2px; width: 8px; height: 8px; }

.projections { left: 252px; top: 309px; width: 809px; height: 312px; }
.projections header { color: #999; }
.winicon { height: 12px; margin-right: 6px; }
.winbody { padding: 14px 11px 0 10px; }
.listbox { height: 195px; margin: 7px 0 16px; padding: 2px 19px 0 3px; background: #fff; border: 1px solid #8a8f98; }
.listbox li { height: 16px; line-height: 16px; padding-left: 1px; }
.listbox .sel { background: #f0f0f0; }
.buttons { display: flex; gap: 18px; }
.end { margin-left: auto; }

.calc { left: 356px; top: 253px; width: 650px; height: 455px; }
.form { padding: 25px 11px 0 10px; }
fieldset { margin: 0 10px 0 12px; padding: 1px 13px 0 16px; border: 1px solid #dcdcdc; }
legend { margin-left: -12px; padding: 0 2px; }
.horizontal { height: 92px; }
.carto { height: 123px; margin-top: 8px; }
.field { display: grid; grid-template-columns: 150px 1fr; align-items: center; height: 20px; }
.horizontal .field { margin: 10px 0; }
.carto .field { margin: 9px 0 13px; }
.pick { position: relative; height: 20px; }
.pick.short { width: 260px; }
.pick > svg { position: absolute; right: 4px; top: 7px; width: 10px; height: 6px; pointer-events: none; }
select { appearance: none; display: block; width: 100%; height: 20px; padding: 0 2px; font: 11px/14px var(--dlg); color: #111; background: #e1e1e1; border: 1px solid #c0c0c0; border-radius: 0; }
.open select { background: #cce4f7; border-color: #3f8fd0; }
.droplist { position: absolute; z-index: 2; top: 20px; left: 0; width: 259px; height: 228px; display: grid; grid-auto-rows: 1fr; background: #fff; border: 1px solid #2a86d2; line-height: 13px; box-shadow: 2px 1px 1px rgba(0, 0, 0, .4); }
.droplist li { padding-left: 1px; }
.hot { background: #0078d7; color: #fff; }
.actions { display: flex; align-items: center; gap: 2px; margin-top: 129px; padding: 14px 0 0 1px; border-top: 1px solid #aaa; }
.default { margin-left: auto; }
.cancel { margin-left: 9px; }
```
